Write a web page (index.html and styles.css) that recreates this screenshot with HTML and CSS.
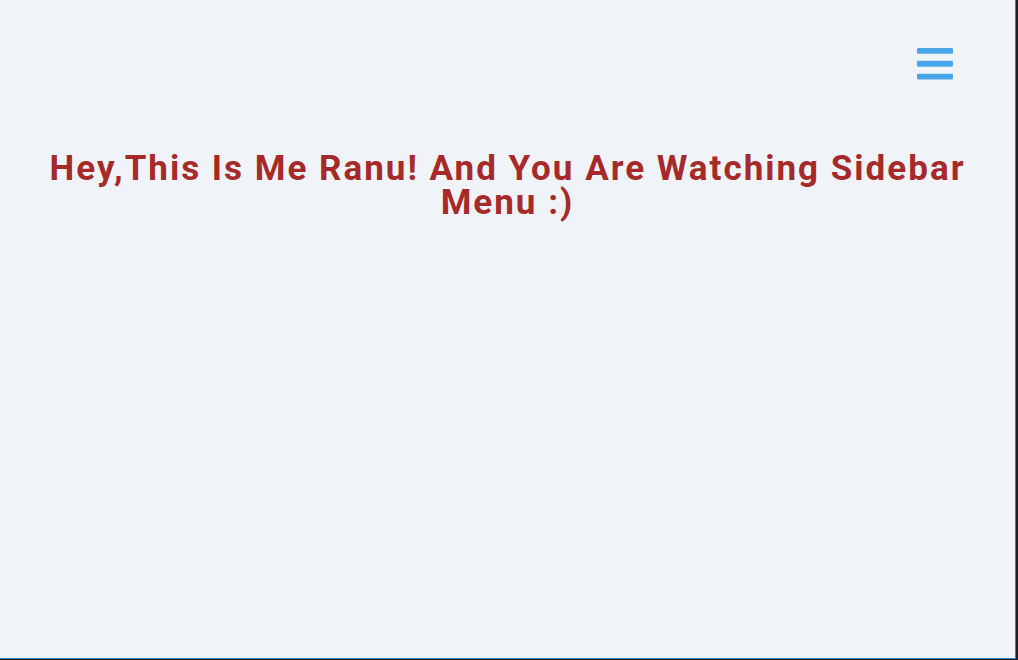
FILE: index.html
```html
<!DOCTYPE html>
<html lang="en">
<head>
<meta charset="utf-8">
<title>Sidebar Menu</title>
<link rel="stylesheet" href="styles.css">
</head>
<body>
<div class="page">
  <header class="topbar">
    <button class="menu-toggle" aria-label="Open menu">
      <svg viewBox="0 60 448 392" width="36" height="31.5" aria-hidden="true">
        <path fill="currentColor" d="M16 132h416c8.837 0 16-7.163 16-16V76c0-8.837-7.163-16-16-16H16C7.163 60 0 67.163 0 76v40c0 8.837 7.163 16 16 16zm0 160h416c8.837 0 16-7.163 16-16v-40c0-8.837-7.163-16-16-16H16c-8.837 0-16 7.163-16 16v40c0 8.837 7.163 16 16 16zm0 160h416c8.837 0 16-7.163 16-16v-40c0-8.837-7.163-16-16-16H16c-8.837 0-16 7.163-16 16v40c0 8.837 7.163 16 16 16z"/>
      </svg>
    </button>
  </header>
  <main class="content">
    <h1 class="title">Hey,This Is Me Ranu! And You Are Watching Sidebar Menu :)</h1>
  </main>
</div>
</body>
</html>
```

FILE: styles.css
```css
html, body {
  margin: 0;
  padding: 0;
  background: #1f1f1f;
}

body {
  width: 1018px;
  height: 660px;
  overflow: hidden;
}

.page {
  width: 1015px;
  height: 658px;
  background: #f0f4f8;
  border-right: 1px solid #2a86dc;
  border-bottom: 1px solid #2a86dc;
  font-family: Roboto, "Liberation Sans", sans-serif;
}

.topbar {
  display: flex;
  justify-content: flex-end;
  padding: 48px 62px 0 0;
  height: 32px;
}

.menu-toggle {
  border: 0;
  padding: 0;
  margin: 0;
  background: none;
  color: #4ba6e9;
  display: block;
  line-height: 0;
  cursor: pointer;
}

.menu-toggle svg {
  display: block;
}

.content {
  padding-top: 72px;
}

.title {
  margin: 0;
  text-align: center;
  font-size: 35px;
  line-height: 34px;
  font-weight: 700;
  letter-spacing: 2px;
  color: #a62a2a;
}
```
